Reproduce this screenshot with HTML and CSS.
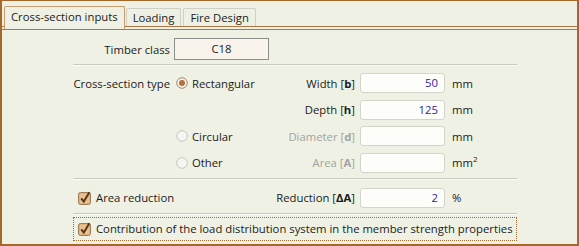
FILE: index.html
```html
<!DOCTYPE html>
<html lang="en">
<head>
  <meta charset="UTF-8">
  <title>Cross-section inputs</title>
  <link rel="stylesheet" href="styles.css">
</head>
<body>

<div class="window">
  <div class="tabs">
    <div class="tab active">Cross-section inputs</div>
    <div class="tab">Loading</div>
    <div class="tab">Fire Design</div>
  </div>

  <div class="panel">
    <div class="timber">
      <span class="lbl">Timber class</span>
      <div class="combo">C18</div>
    </div>

    <div class="sep"></div>

    <div class="grid">
      <span class="lbl">Cross-section type</span>
      <span class="radio"><svg width="12" height="12" viewBox="0 0 12 12"><circle cx="6" cy="6" r="5.3" fill="#f7f2ea" stroke="#a4896a"/><circle cx="6" cy="6" r="3" fill="#b2713f"/></svg>Rectangular</span>
      <span class="lbl">Width [<b>b</b>]</span>
      <div class="field">50</div>
      <span class="unit">mm</span>

      <span></span>
      <span></span>
      <span class="lbl">Depth [<b>h</b>]</span>
      <div class="field">125</div>
      <span class="unit">mm</span>

      <span></span>
      <span class="radio"><svg width="12" height="12" viewBox="0 0 12 12"><circle cx="6" cy="6" r="5.3" fill="#f5f5f1" stroke="#c6c6c0"/></svg>Circular</span>
      <span class="lbl off">Diameter [<b>d</b>]</span>
      <div class="field"></div>
      <span class="unit">mm</span>

      <span></span>
      <span class="radio"><svg width="12" height="12" viewBox="0 0 12 12"><circle cx="6" cy="6" r="5.3" fill="#f5f5f1" stroke="#c6c6c0"/></svg>Other</span>
      <span class="lbl off">Area [<b>A</b>]</span>
      <div class="field"></div>
      <span class="unit">mm<sup>2</sup></span>
    </div>

    <div class="sep sep-low"></div>

    <div class="grid grid-one">
      <span class="check wide"><svg width="14" height="14" viewBox="0 0 14 14"><rect x="0.5" y="1.5" width="12" height="12" rx="2" fill="#ddb37c" stroke="#9c7b58"/><rect x="2" y="3" width="9" height="9" rx="1" fill="#e6c293"/><path d="M3.2 7.4 L5.8 10.6 L11.4 1.2" fill="none" stroke="#573611" stroke-width="2"/></svg>Area reduction</span>
      <span class="lbl">Reduction [<b>ΔA</b>]</span>
      <div class="field">2</div>
      <span class="unit">%</span>
    </div>

    <div class="sep sep-low"></div>

    <div class="focus">
      <span class="check"><svg width="14" height="14" viewBox="0 0 14 14"><rect x="0.5" y="1.5" width="12" height="12" rx="2" fill="#ddb37c" stroke="#9c7b58"/><rect x="2" y="3" width="9" height="9" rx="1" fill="#e6c293"/><path d="M3.2 7.4 L5.8 10.6 L11.4 1.2" fill="none" stroke="#573611" stroke-width="2"/></svg>Contribution of the load distribution system in the member strength properties</span>
    </div>
  </div>
</div>

</body>
</html>
```

FILE: styles.css
```css
body {
  margin: 0;
  font-family: "Open Sans", "Noto Sans", sans-serif;
  font-size: 11.3px;
  color: #1b1b1b;
}
.window {
  width: 579px;
  height: 246px;
  box-sizing: border-box;
  border: 2px solid #a4682b;
  border-top-width: 1px;
  background-color: #eff1e4;
}
.tabs {
  display: flex;
  align-items: flex-end;
  height: 25px;
  padding-left: 2px;
  border-bottom: 1px solid #ae7845;
}
.tab {
  height: 17px;
  line-height: 17px;
  padding: 0 6px;
  margin-right: 2px;
  border: 1px solid #cfd0c6;
  border-bottom: none;
  border-radius: 2px 2px 0 0;
  background-color: #eef0e3;
}
.tab.active {
  height: 22px;
  line-height: 20px;
  padding: 0 6px;
  margin-right: 1px;
  margin-bottom: -3px;
  border-color: #c99c6c;
  background-color: #eff1e4;
}
.panel {
  margin-top: 2px;
  border-top: 1px solid #ae7845;
}
.lbl {
  text-align: right;
}
.lbl b {
  font-weight: bold;
}
.off {
  color: #a3a3a3;
}
.timber {
  display: flex;
  align-items: center;
  margin-top: 8px;
  height: 22px;
}
.timber .lbl {
  width: 168px;
}
.combo {
  width: 95px;
  height: 22px;
  line-height: 20px;
  box-sizing: border-box;
  margin-left: 4px;
  border: 1px solid #8e8e8a;
  background-color: #f8f4ec;
  text-align: center;
}
.sep {
  width: 444px;
  margin: 4px 0 0 71px;
  border-top: 1px solid #c9cbbf;
  border-bottom: 1px solid #fafbf5;
}
.sep-low {
  margin-top: 5px;
}
.grid {
  display: grid;
  grid-template-columns: 168px 90px 95px 92px auto;
  grid-auto-rows: 20px;
  row-gap: 6.67px;
  align-items: center;
  margin-top: 7px;
}
.grid-one {
  margin-top: 8px;
}
.radio,
.check {
  display: flex;
  align-items: center;
}
.radio {
  padding-left: 6px;
}
.radio svg {
  margin-right: 4px;
}
.check svg {
  margin-right: 4px;
}
.wide {
  grid-column: span 2;
  padding-left: 76px;
}
.field {
  width: 85px;
  height: 20px;
  line-height: 18px;
  box-sizing: border-box;
  margin-left: 5px;
  padding-right: 6px;
  border: 1px solid #d3d5ca;
  border-radius: 3px;
  background-color: #fdfdf9;
  text-align: right;
  color: #2a26a6;
}
.unit {
  padding-left: 5px;
}
.unit sup {
  font-size: 8px;
  line-height: 0;
}
.focus {
  width: 444px;
  height: 24px;
  box-sizing: border-box;
  margin: 2px 0 0 71px;
  padding-left: 4px;
  border: 1px dotted #9c6c3c;
  display: flex;
  align-items: center;
}
```
